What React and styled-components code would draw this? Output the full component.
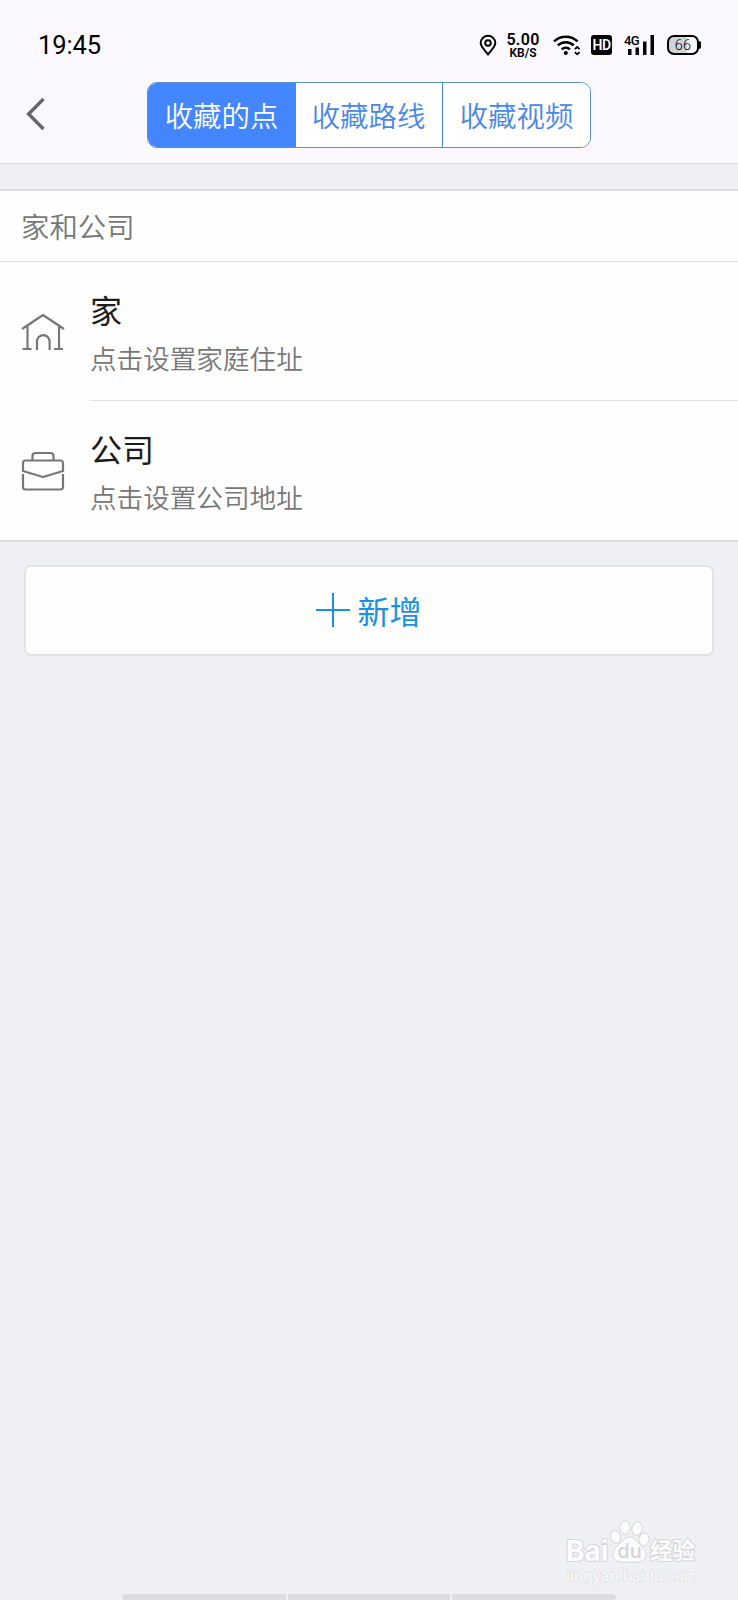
import { useState } from 'react'
import styled, { createGlobalStyle } from 'styled-components'

const GlobalStyle = createGlobalStyle`
  * {
    box-sizing: border-box;
  }

  body {
    margin: 0;
    background-color: #eff0f4;
    font-family: 'Noto Sans', 'Noto Sans CJK SC', sans-serif;
  }
`

const TABS = ['收藏的点', '收藏路线', '收藏视频']

const HomeIcon = () => (
  <Icon width="44" height="38" viewBox="0 0 44 38">
    <path d="M1 16 22 2l21 14M6.500 13.500v21.500M38 13.500v21.500M1.500 36h9M33 36h9M16 37v-8.500a6.300 6.300 0 0 1 12.600 0v8.500" />
  </Icon>
)

const CompanyIcon = () => (
  <Icon width="44" height="42" viewBox="0 0 44 42">
    <path d="M11.500 10V6a3 3 0 0 1 3-3h15a3 3 0 0 1 3 3v4" />
    <path d="M2 21v-8a2.500 2.500 0 0 1 2.500-2.500h35A2.500 2.500 0 0 1 42 13v8L22 27Z" />
    <path d="M2 24v13a2.500 2.500 0 0 0 2.500 2.500h35A2.500 2.500 0 0 0 42 37V24" />
  </Icon>
)

const PLACES = [
  { title: '家', hint: '点击设置家庭住址', icon: HomeIcon },
  { title: '公司', hint: '点击设置公司地址', icon: CompanyIcon },
]

const StatusBar = () => (
  <Status>
    <Time>19:45</Time>
    <Indicators>
      <svg width="18" height="22" viewBox="0 0 18 22" fill="none" stroke="#000" strokeWidth="2">
        <path d="M9 20.500C5.500 16 1.700 12.700 1.700 9a7.300 7.300 0 0 1 14.600 0C16.300 12.700 12.500 16 9 20.500Z" />
        <circle cx="9" cy="9" r="2.800" />
      </svg>
      <Speed>
        <strong>5.00</strong>
        <span>KB/S</span>
      </Speed>
      <svg width="28" height="22" viewBox="0 0 28 22" fill="none" stroke="#000">
        <path d="M1 7.400a17 17 0 0 1 23.600 0M4.800 11.400a11.500 11.500 0 0 1 16 0M8.700 15.300a6 6 0 0 1 8.200 0" strokeWidth="2.500" />
        <circle cx="12.800" cy="19" r="2" fill="#000" stroke="none" />
        <path d="m21.800 15.200 2.400-2.200 2.400 2.200M21.800 18.200l2.400 2.200 2.400-2.200" strokeWidth="1.800" />
      </svg>
      <HdBadge>HD</HdBadge>
      <Signal>
        <svg width="32" height="22" viewBox="0 0 32 22">
          <path d="M4 15h3.500v6H4zM11.500 13.500H15V21h-3.500zM19 7.500h3.500V21H19zM26.500 1H30v20h-3.500z" />
        </svg>
        <Network>4G</Network>
      </Signal>
      <BatteryWrap>
        <Battery>66</Battery>
        <BatteryCap />
      </BatteryWrap>
    </Indicators>
  </Status>
)

const Watermark = () => (
  <Mark>
    <MarkRow>
      <MarkWord $size={28} $width={44}>Bai</MarkWord>
      <Paw width="40" height="44" viewBox="0 0 40 44">
        <g fill="#fcfcfd" stroke="#d6d7da" strokeWidth="1">
          <ellipse cx="5.500" cy="17" rx="5" ry="6.500" transform="rotate(-12 5.500 17)" />
          <ellipse cx="15" cy="7.500" rx="5" ry="6.800" />
          <ellipse cx="27" cy="8.500" rx="5" ry="6.800" transform="rotate(10 27 8.500)" />
          <ellipse cx="34" cy="19.500" rx="5" ry="6.500" transform="rotate(15 34 19.500)" />
          <path d="M19.500 17c5 0 8 5.500 12 9s6 9 3 13-9 3-15 3-12 1-15-3-1-9.500 3-13 7-9 12-9Z" />
        </g>
        <text x="19.500" y="38" textAnchor="middle" fontFamily="Inter" fontWeight="500" fontSize="20" fill="#d3d4d8">
          du
        </text>
      </Paw>
      <MarkWord $size={22.5} $width={48}>经验</MarkWord>
    </MarkRow>
    <MarkUrl>jingyan.baidu.com</MarkUrl>
  </Mark>
)

const App = () => {
  const [active, setActive] = useState(0)

  return (
    <>
      <GlobalStyle />
      <Page>
        <Header>
          <StatusBar />
          <NavBar>
            <BackButton aria-label="返回">
              <svg width="20" height="34" viewBox="0 0 20 34" fill="none" stroke="#666" strokeWidth="3.400">
                <path d="M17.500 2 2.600 17l14.900 15" />
              </svg>
            </BackButton>
            <Tabs>
              {TABS.map((label, i) => (
                <Tab key={label} $active={i === active} onClick={() => setActive(i)}>
                  {label}
                </Tab>
              ))}
            </Tabs>
          </NavBar>
        </Header>

        <Section>
          <SectionTitle>家和公司</SectionTitle>
          {PLACES.map(({ title, hint, icon: PlaceIcon }) => (
            <Place key={title}>
              <PlaceIcon />
              <PlaceText>
                <PlaceTitle>{title}</PlaceTitle>
                <PlaceHint>{hint}</PlaceHint>
              </PlaceText>
            </Place>
          ))}
        </Section>

        <AddButton>
          <svg width="34" height="34" viewBox="0 0 34 34" stroke="#1b8fe0" strokeWidth="2">
            <path d="M17 0v34M0 17h34" />
          </svg>
          新增
        </AddButton>

        <Footer>
          <Watermark />
          <BottomBar>
            <i />
            <i />
            <i />
          </BottomBar>
        </Footer>
      </Page>
    </>
  )
}

export default App

const Page = styled.div`
  display: flex;
  flex-direction: column;
  width: 738px;
  height: 1600px;
  overflow: hidden;
  background-color: #eff0f4;
`

const Header = styled.header`
  height: 164px;
  background-color: #fbf9fd;
  border-bottom: 1px solid #dcdcde;
`

const Status = styled.div`
  display: flex;
  justify-content: space-between;
  height: 82px;
  padding: 34px 37px 0 38px;
`

const Time = styled.div`
  font-family: Roboto, sans-serif;
  font-size: 25.500px;
  line-height: 23px;
  letter-spacing: -0.1px;
  color: #000;
`

const Indicators = styled.div`
  display: flex;
  align-items: flex-start;
  height: 22px;

  svg {
    display: block;
  }
`

const Speed = styled.div`
  display: flex;
  flex-direction: column;
  align-items: center;
  width: 34px;
  margin: -1px 13px 0 9px;
  font-family: Roboto, sans-serif;
  font-weight: 600;
  color: #000;

  strong {
    font-size: 16px;
    line-height: 14px;
    font-weight: 600;
    letter-spacing: 0.3px;
  }

  span {
    font-size: 12px;
    line-height: 12px;
  }
`

const HdBadge = styled.div`
  width: 21px;
  height: 20px;
  margin: 1px 12px 0 10px;
  border-radius: 3px;
  background-color: #000;
  color: #fff;
  font: 600 14px/21px Roboto, sans-serif;
  letter-spacing: -0.6px;
  text-align: center;
`

const Signal = styled.div`
  position: relative;
  width: 32px;
  margin-right: 11px;
`

const Network = styled.span`
  position: absolute;
  top: 0;
  left: 0;
  font: 500 13px/13px Roboto, sans-serif;
  letter-spacing: -0.6px;
  color: #000;
`

const BatteryWrap = styled.div`
  display: flex;
  align-items: center;
  margin-top: 1px;
`

const Battery = styled.div`
  width: 32px;
  height: 20px;
  border: 2px solid #000;
  border-radius: 7px;
  background: linear-gradient(90deg, #d3d2d5 66%, #fbf9fd 66%);
  font: 300 14.5px/17px Roboto, sans-serif;
  letter-spacing: 0.3px;
  text-align: center;
  color: #000;
`

const BatteryCap = styled.i`
  width: 2px;
  height: 8px;
  border-radius: 0 2px 2px 0;
  background-color: #000;
`

const NavBar = styled.nav`
  display: grid;
  grid-template-columns: 147px 444px 1fr;
`

const BackButton = styled.button`
  display: flex;
  align-items: center;
  padding: 0 0 2px 26px;
  border: 0;
  background: none;
`

const Tabs = styled.div`
  display: grid;
  grid-template-columns: 148px 147px 1fr;
  height: 66px;
  border: 1px solid #5b8fd0;
  border-radius: 10px;
  overflow: hidden;
  background-color: #fff;
`

const Tab = styled.button`
  padding: 0 1px 1px 0;
  border: 0;
  border-right: ${p => (p.$active ? '0' : '1px solid #4c86d6')};
  background-color: ${p => (p.$active ? '#4486ff' : '#fff')};
  color: ${p => (p.$active ? '#fff' : '#4a86e8')};
  font-family: 'Noto Sans CJK SC', sans-serif;
  font-size: 28.400px;
  font-weight: 350;

  &:last-child {
    padding-right: 0;
    border-right: 0;
  }
`

const Section = styled.section`
  margin-top: 25px;
  border-top: 2px solid #dedede;
  border-bottom: 2px solid #dcdcde;
  background-color: #fefefe;
`

const SectionTitle = styled.h2`
  height: 71px;
  margin: 0;
  padding-left: 21px;
  border-bottom: 1px solid #dedede;
  font-size: 28.400px;
  font-weight: 350;
  line-height: 72px;
  color: #777;
`

const Place = styled.div`
  display: flex;
  align-items: center;
  height: 139px;
  padding-left: 21px;
`

const Icon = styled.svg`
  flex: none;
  margin-top: 1px;
  fill: none;
  stroke: #777;
  stroke-width: 2.2;
  stroke-linejoin: round;
`

const PlaceText = styled.div`
  flex: 1;
  height: 100%;
  margin-left: 25px;
  padding-top: 25px;

  ${Place}:not(:last-child) & {
    border-bottom: 1px solid #e4e4e4;
  }
`

const PlaceTitle = styled.div`
  font-size: 32px;
  line-height: 48px;
  color: #1c1c1c;
`

const PlaceHint = styled.div`
  font-size: 26.600px;
  font-weight: 350;
  line-height: 49px;
  color: #777;
`

const AddButton = styled.button`
  display: flex;
  flex: none;
  align-items: center;
  justify-content: center;
  gap: 7px;
  height: 91px;
  margin: 23px 24px 0;
  padding-bottom: 3px;
  border: 2px solid #e3e3e5;
  border-radius: 7px;
  background-color: #fefefe;
  font-family: 'Noto Sans CJK SC', sans-serif;
  font-size: 32px;
  color: #1b8fe0;
`

const Footer = styled.footer`
  display: flex;
  flex-direction: column;
  margin-top: auto;
`

const Mark = styled.div`
  align-self: flex-end;
  width: 132px;
  margin-right: 40px;
  color: #fcfcfd;
`

const MarkRow = styled.div`
  display: flex;
  align-items: flex-end;
  height: 44px;
`

const MarkWord = styled.span`
  width: ${p => p.$width}px;
  font-family: Inter, 'Noto Sans CJK SC', sans-serif;
  font-size: ${p => p.$size}px;
  font-weight: 700;
  line-height: 26px;
  white-space: nowrap;
  -webkit-text-stroke: 2px #d6d7da;
  paint-order: stroke fill;
`

const Paw = styled.svg`
  flex: none;
  display: block;
`

const MarkUrl = styled.div`
  height: 30px;
  font-family: 'Noto Sans', sans-serif;
  font-size: 15.300px;
  line-height: 22px;
  white-space: nowrap;
  -webkit-text-stroke: 1.5px #dfe0e3;
  paint-order: stroke fill;
`

const BottomBar = styled.div`
  display: grid;
  grid-template-columns: 164px 162px 164px;
  gap: 2px;
  height: 6px;
  margin-left: 122px;

  i {
    background-color: #dcdde0;
  }

  i:first-child {
    border-radius: 4px 0 0 4px;
  }

  i:last-child {
    border-radius: 0 4px 4px 0;
  }
`
